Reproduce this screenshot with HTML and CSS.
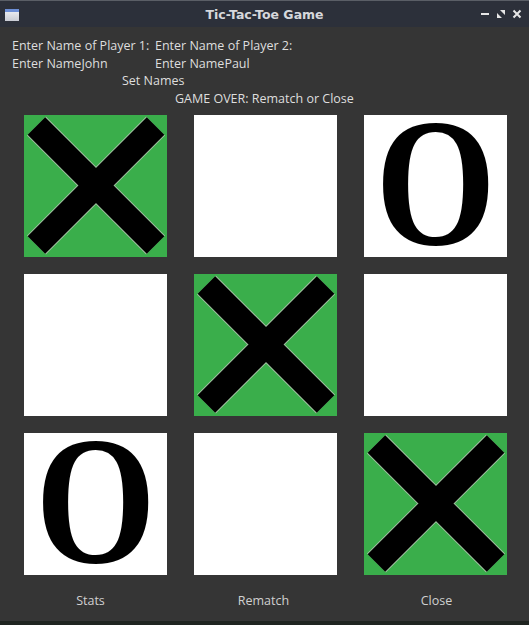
FILE: index.html
```html
<!DOCTYPE html>
<html>
<head>
<meta charset="utf-8">
<link rel="stylesheet" href="styles.css">
</head>
<body>
<div class="window">
  <div class="titlebar">
    <svg class="app-icon" width="14" height="12" viewBox="0 0 14 12">
      <defs>
        <linearGradient id="g" x1="0" y1="0" x2="0" y2="1">
          <stop offset="0" stop-color="#f2f4f8"/>
          <stop offset="1" stop-color="#c9ccd4"/>
        </linearGradient>
      </defs>
      <rect x="0" y="0" width="14" height="12" fill="url(#g)"/>
      <rect x="0" y="0" width="14" height="3" fill="#6d8fd6"/>
    </svg>
    <div class="title">Tic-Tac-Toe Game</div>
    <div class="controls">
      <svg width="10" height="10" viewBox="0 0 10 10"><rect x="1" y="4" width="8" height="2" fill="#e6e6e6"/></svg>
      <svg width="10" height="10" viewBox="0 0 10 10"><path d="M4 1 H9 V6 Z M1 4 L6 9 H1 Z" fill="#e6e6e6"/></svg>
      <svg width="10" height="10" viewBox="0 0 10 10"><path d="M1.5 1.5 L8.5 8.5 M8.5 1.5 L1.5 8.5" stroke="#e6e6e6" stroke-width="2"/></svg>
    </div>
  </div>
  <div class="content">
    <div class="names">
      <div class="row"><span class="c1">Enter Name of Player 1:</span><span class="c2">Enter Name of Player 2:</span></div>
      <div class="row"><span class="c1">Enter NameJohn</span><span class="c2">Enter NamePaul</span></div>
      <div class="row"><span class="setnames">Set Names</span></div>
      <div class="row"><span class="status">GAME OVER: Rematch or Close</span></div>
    </div>
    <div class="board">
      <div class="cell win"><svg class="x" viewBox="0 0 143 143"><path d="M12 11 L132 131 M132 11 L12 131" stroke="#9fbf9f" stroke-width="27"/><path d="M12 11 L132 131 M132 11 L12 131" stroke="#000" stroke-width="25"/></svg></div>
      <div class="cell"></div>
      <div class="cell"><span class="o">O</span></div>
      <div class="cell"></div>
      <div class="cell win"><svg class="x" viewBox="0 0 143 143"><path d="M12 11 L132 131 M132 11 L12 131" stroke="#9fbf9f" stroke-width="27"/><path d="M12 11 L132 131 M132 11 L12 131" stroke="#000" stroke-width="25"/></svg></div>
      <div class="cell"></div>
      <div class="cell"><span class="o">O</span></div>
      <div class="cell"></div>
      <div class="cell win"><svg class="x" viewBox="0 0 143 143"><path d="M12 11 L132 131 M132 11 L12 131" stroke="#9fbf9f" stroke-width="27"/><path d="M12 11 L132 131 M132 11 L12 131" stroke="#000" stroke-width="25"/></svg></div>
    </div>
    <div class="footer">
      <span>Stats</span>
      <span>Rematch</span>
      <span>Close</span>
    </div>
  </div>
</div>
</body>
</html>
```

FILE: styles.css
```css
html, body {
  margin: 0;
  padding: 0;
  background: #1f2420;
  width: 529px;
  height: 625px;
  overflow: hidden;
}
.window {
  width: 529px;
  height: 621px;
  background: #353535;
  display: flex;
  flex-direction: column;
}
.titlebar {
  height: 27px;
  background: #2c303a;
  border-top: 1px solid #5a5e66;
  box-sizing: border-box;
  display: flex;
  align-items: center;
  position: relative;
}
.app-icon {
  margin-left: 5px;
  margin-top: 1px;
}
.title {
  position: absolute;
  left: 0;
  right: 0;
  text-align: center;
  font-family: "DejaVu Sans", sans-serif;
  font-weight: bold;
  font-size: 12.5px;
  color: #d6d8dc;
  pointer-events: none;
}
.controls {
  margin-left: auto;
  margin-right: 7px;
  display: flex;
  gap: 6px;
  align-items: center;
}
.content {
  flex: 1;
  display: flex;
  flex-direction: column;
  font-family: "Open Sans", sans-serif;
  font-size: 12.5px;
  color: #dedede;
}
.names {
  padding-top: 10px;
  height: 78px;
}
.row {
  height: 17.5px;
  line-height: 17.5px;
  display: flex;
  white-space: nowrap;
}
.c1 {
  margin-left: 12px;
  width: 143px;
}
.setnames {
  margin-left: 122px;
}
.status {
  margin-left: 175px;
}
.board {
  display: grid;
  grid-template-columns: repeat(3, 143px);
  grid-auto-rows: 142px;
  column-gap: 27px;
  row-gap: 17px;
  margin-left: 24px;
}
.cell {
  background: #ffffff;
  display: flex;
  align-items: center;
  justify-content: center;
}
.cell.win {
  background: #3aae4b;
}
.x {
  width: 143px;
  height: 142px;
  display: block;
}
.o {
  font-family: "Liberation Serif", serif;
  font-weight: bold;
  font-size: 182px;
  line-height: 136px;
  height: 136px;
  color: #000;
  display: block;
  transform: translateY(-3px) scaleX(0.85);
}
.footer {
  display: grid;
  grid-template-columns: repeat(3, 173px);
  padding-left: 4px;
  margin-top: 17px;
  color: #d0d0d0;
  font-size: 12.5px;
  line-height: 17px;
}
.footer span {
  text-align: center;
}
```
